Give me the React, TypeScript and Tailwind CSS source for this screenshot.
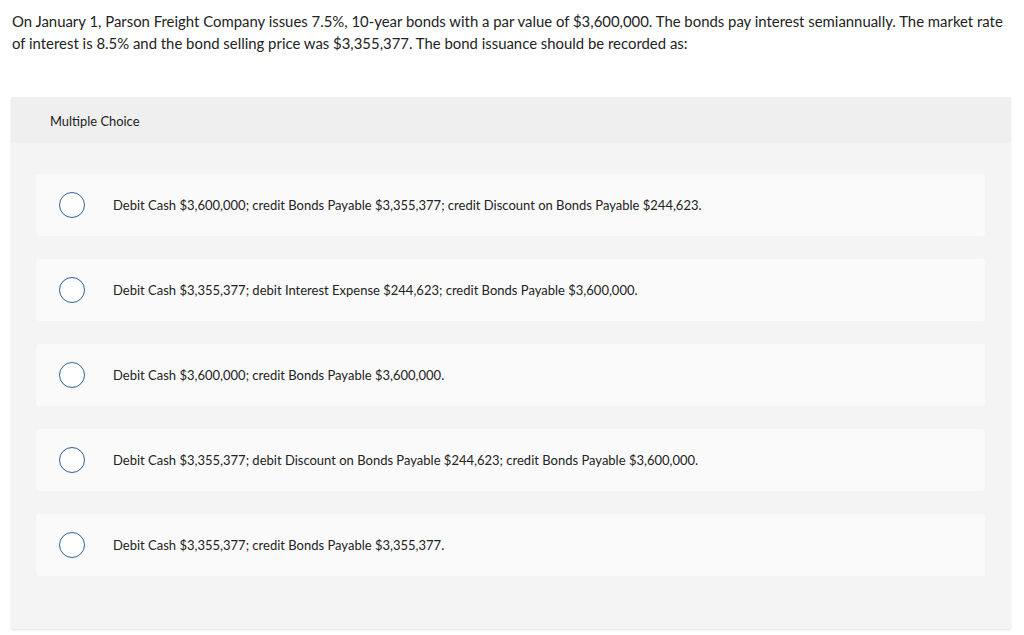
const choices = [
  "Debit Cash $3,600,000; credit Bonds Payable $3,355,377; credit Discount on Bonds Payable $244,623.",
  "Debit Cash $3,355,377; debit Interest Expense $244,623; credit Bonds Payable $3,600,000.",
  "Debit Cash $3,600,000; credit Bonds Payable $3,600,000.",
  "Debit Cash $3,355,377; debit Discount on Bonds Payable $244,623; credit Bonds Payable $3,600,000.",
  "Debit Cash $3,355,377; credit Bonds Payable $3,355,377.",
];

export default function App() {
  return (
    <div className="min-h-[635px] bg-white font-['Lato',sans-serif] text-[#222]">
      <p className="w-[1022px] px-[12px] pt-[10px] text-[14.9px] leading-[22px]">
        On January 1, Parson Freight Company issues 7.5%, 10-year bonds with a par value of $3,600,000. The bonds pay
        interest semiannually. The market rate of interest is 8.5% and the bond selling price was $3,355,377. The bond
        issuance should be recorded as:
      </p>

      <div className="mx-[11px] mt-[43px] w-[1000px] rounded-[2px] bg-[#f4f4f4] shadow-[0_1px_2px_rgba(0,0,0,0.12)]">
        <div className="flex h-[46px] items-center rounded-t-[2px] bg-[#efefef] pl-[39px] pt-[3px] text-[12.9px]">
          Multiple Choice
        </div>
        <div className="flex flex-col gap-[23px] pl-[25px] pr-[26px] pt-[31px] pb-[53px]">
          {choices.map((c) => (
            <label
              key={c}
              className="flex h-[62px] cursor-pointer items-center rounded-[4px] bg-[#fafafa] pl-[23px] text-[13px]"
            >
              <span className="h-[26px] w-[26px] shrink-0 rounded-full border-[1.5px] border-[#2d5f9c] bg-white" />
              <span className="ml-[28px] pt-[2px]">{c}</span>
            </label>
          ))}
        </div>
      </div>
    </div>
  );
}
